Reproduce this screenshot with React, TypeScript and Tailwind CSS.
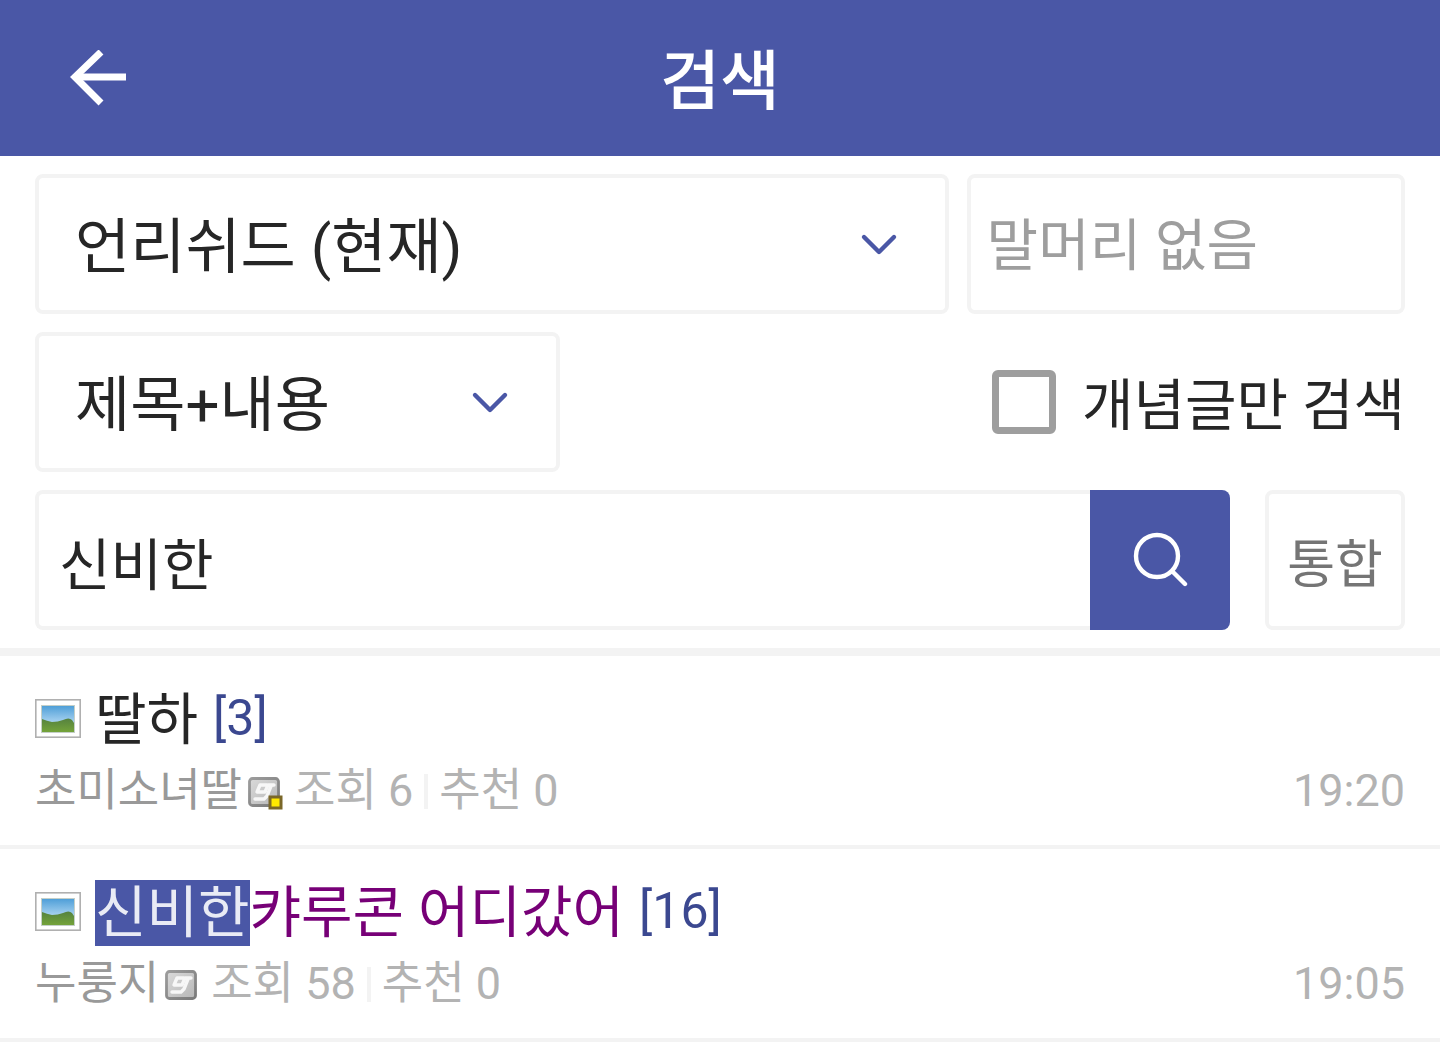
import React, { useState } from 'react';

const posts = [
  { id: 1, mark: '', title: '딸하', replies: 3, writer: '초미소녀딸', fixed: true, views: 6, likes: 0, time: '19:20', visited: false },
  { id: 2, mark: '신비한', title: '캬루콘 어디갔어', replies: 16, writer: '누룽지', fixed: false, views: 58, likes: 0, time: '19:05', visited: true },
];

function Chevron() {
  return (
    <svg className="pointer-events-none absolute inset-y-0 right-[50px] my-auto h-6 w-10" viewBox="0 0 40 24" fill="none">
      <path d="M5 5 L20 20 L35 5" stroke="#4a57a6" strokeWidth="4.4" strokeLinecap="round" strokeLinejoin="round" />
    </svg>
  );
}

function PhotoIcon() {
  return (
    <svg className="h-[39px] w-[46px] shrink-0" viewBox="0 0 46 39">
      <defs>
        <linearGradient id="sky" x1="0" y1="0" x2="0" y2="1">
          <stop offset="0" stopColor="#4f9fd8" />
          <stop offset="0.6" stopColor="#a4d0ef" />
        </linearGradient>
        <linearGradient id="hill" x1="0" y1="0" x2="0" y2="1">
          <stop offset="0" stopColor="#55823f" />
          <stop offset="1" stopColor="#74a33a" />
        </linearGradient>
      </defs>
      <rect x="0.8" y="0.8" width="44.4" height="37.4" fill="#fff" stroke="#b0b0b0" strokeWidth="1.6" />
      <rect x="6" y="6" width="34" height="28" fill="#c4cfc8" />
      <rect x="7" y="7" width="32" height="26" fill="url(#sky)" />
      <path d="M7 20 Q12 22 17 23 Q23 23 28 21 Q34 18 37 21 L39 24 V33 H7Z" fill="url(#hill)" />
    </svg>
  );
}

function UserIcon({ fixed }: { fixed: boolean }) {
  return (
    <svg className="mx-[6px] mt-[3px] h-9 w-9 shrink-0" viewBox="0 0 36 36">
      <defs>
        <linearGradient id="plate" x1="0" y1="0" x2="1" y2="1">
          <stop offset="0" stopColor="#dadada" />
          <stop offset="1" stopColor="#b6b6b6" />
        </linearGradient>
        <linearGradient id="rim" x1="0" y1="0" x2="1" y2="1">
          <stop offset="0" stopColor="#9c9c9c" />
          <stop offset="1" stopColor="#7a7a7a" />
        </linearGradient>
      </defs>
      <rect x="1.5" y="3.5" width="29" height="27" rx="3" fill="url(#plate)" stroke="url(#rim)" strokeWidth="2.8" />
      <g fill="none" stroke="#f7f7f7" strokeWidth="3.4" strokeLinecap="round" strokeLinejoin="round">
        <path d="M19 10 H12 L9 17 H17 L20 10 H26" />
        <path d="M23 11 L19 21 L16 24 H7" />
      </g>
      {fixed && <rect x="22" y="22" width="11" height="11" fill="#ffe900" stroke="#7a6728" strokeWidth="3" />}
    </svg>
  );
}

export default function App() {
  const [keyword, setKeyword] = useState('신비한');
  const [heading, setHeading] = useState('');
  const [onlyBest, setOnlyBest] = useState(false);

  return (
    <div className="min-h-screen bg-white text-[#262626] font-[Roboto,'Noto_Sans_CJK_KR',sans-serif]">
      {/* Header */}
      <header className="grid h-[156px] grid-cols-[1fr_auto_1fr] items-center bg-[#4a57a6] px-[70px] text-white">
        <button aria-label="뒤로" className="w-14">
          <svg className="h-14 w-14" viewBox="0 0 56 56" fill="none" stroke="#fff" strokeWidth="7">
            <path d="M31 2 L5 27 L31 53" />
            <path d="M8 27 H56" />
          </svg>
        </button>
        <h1 className="pt-2 text-[65px] leading-[96px] font-medium">검색</h1>
      </header>

      {/* Search form */}
      <form
        onSubmit={(e) => e.preventDefault()}
        className="flex flex-col gap-[18px] border-b-8 border-[#f3f3f3] px-[35px] py-[18px]"
      >
        <div className="flex gap-[18px]">
          <div className="relative flex-1">
            <select aria-label="갤러리" className="h-[140px] w-full appearance-none rounded-lg border-4 border-[#f3f3f3] bg-white px-9 pt-2 text-[60px]">
              <option>언리쉬드 (현재)</option>
            </select>
            <Chevron />
          </div>
          <input
            aria-label="말머리"
            value={heading}
            onChange={(e) => setHeading(e.target.value)}
            placeholder="말머리 없음"
            className="h-[140px] w-[32%] rounded-lg border-4 border-[#f3f3f3] px-4 pt-1 text-[56px] placeholder:text-[#9e9e9e]"
          />
        </div>

        <div className="flex items-center justify-between">
          <div className="relative w-[525px]">
            <select aria-label="검색 대상" className="h-[140px] w-full appearance-none rounded-lg border-4 border-[#f3f3f3] bg-white px-9 pt-2 text-[60px]">
              <option>제목+내용</option>
            </select>
            <Chevron />
          </div>
          <label className="flex items-center gap-[26px] text-[56px] leading-[80px]">
            <input
              type="checkbox"
              checked={onlyBest}
              onChange={(e) => setOnlyBest(e.target.checked)}
              className="h-16 w-16 appearance-none rounded-md border-[7px] border-[#9e9e9e] checked:bg-[#4a57a6]"
            />
            <span className="pt-2">개념글만 검색</span>
          </label>
        </div>

        <div className="flex">
          <input
            aria-label="검색어"
            value={keyword}
            onChange={(e) => setKeyword(e.target.value)}
            className="h-[140px] min-w-0 flex-1 rounded-l-lg border-4 border-r-0 border-[#f3f3f3] px-5 text-[56px]"
          />
          <button aria-label="검색" className="flex h-[140px] w-[140px] items-center justify-center rounded-r-lg bg-[#4a57a6]">
            <svg className="h-14 w-14" viewBox="0 0 56 56" fill="none" stroke="#fff" strokeWidth="4.4" strokeLinecap="round">
              <circle cx="25" cy="24" r="21" />
              <path d="M41 40 L53 52" />
            </svg>
          </button>
          <button className="ml-[35px] h-[140px] w-[140px] rounded-lg border-4 border-[#f3f3f3] pt-3 text-[52px] text-[#757575]">통합</button>
        </div>
      </form>

      {/* Results */}
      <ul>
        {posts.map((post) => (
          <li key={post.id} className="border-b-4 border-[#f3f3f3] px-[35px] pt-[22px] pb-[21px]">
            <a href="#" className="flex h-20 items-center text-[56px] leading-[80px]">
              <PhotoIcon />
              <span className={post.visited ? 'ml-[14px] pt-1 text-[#770077]' : 'ml-[14px] pt-1'}>
                {post.mark && <mark className="bg-[#4a57a6] text-[#e9ebf5]">{post.mark}</mark>}
                {post.title}
              </span>
              <span className="ml-[15px] text-[50px] text-[#3b4890]">[{post.replies}]</span>
            </a>
            <div className="flex h-[66px] items-center text-[45px] leading-[66px] text-[#b3b3b3]">
              <span className="text-[#999]">{post.writer}</span>
              <UserIcon fixed={post.fixed} />
              <span className="ml-1">조회 {post.views}</span>
              <span className="mx-[11px] h-[35px] w-1 bg-[#f3f3f3]" />
              <span>추천 {post.likes}</span>
              <time className="ml-auto">{post.time}</time>
            </div>
          </li>
        ))}
      </ul>
    </div>
  );
}
